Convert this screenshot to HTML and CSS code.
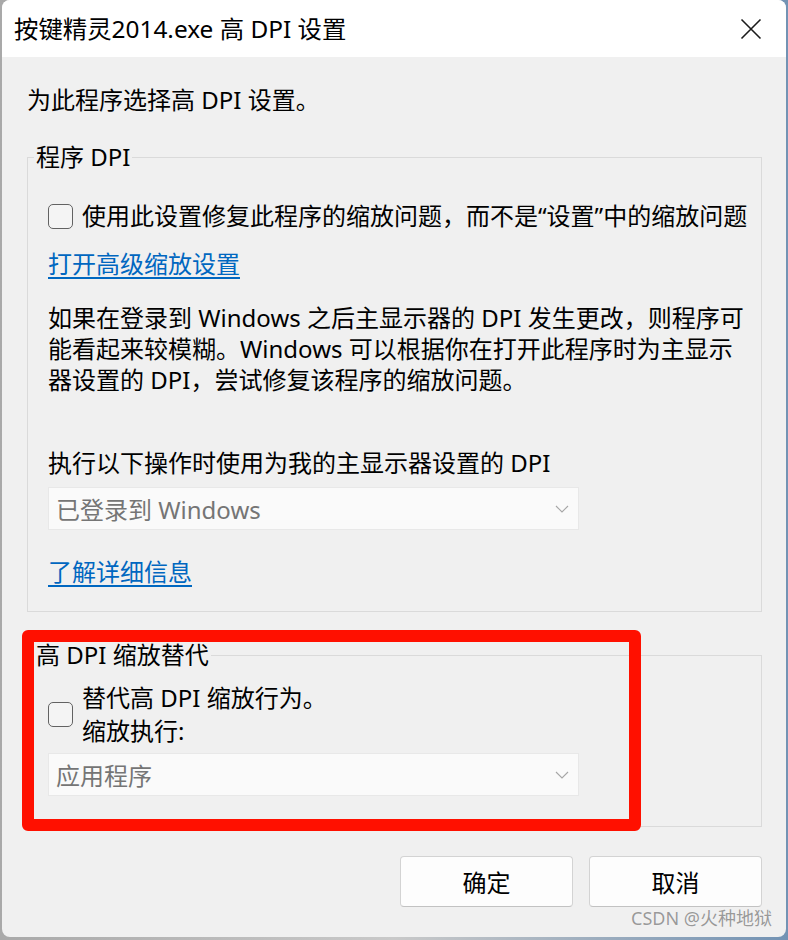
FILE: index.html
```html
<!DOCTYPE html>
<html lang="zh-CN">
<head>
    <meta charset="UTF-8">
    <meta name="viewport" content="width=device-width, initial-scale=1.0">
    <title>按键精灵2014.exe 高 DPI 设置</title>
    <link rel="stylesheet" href="styles.css">
</head>
<body>

    <div class="window">
        <div class="titlebar">
            <span class="title">按键精灵2014.exe 高 DPI 设置</span>
            <button class="close-btn" type="button" aria-label="关闭">
                <svg width="22" height="22" viewBox="0 0 22 22">
                    <path d="M1.5 1.5 L20.5 20.5 M20.5 1.5 L1.5 20.5" stroke="#1b1b1b" stroke-width="1.6" fill="none"/>
                </svg>
            </button>
        </div>

        <div class="content">
            <p class="intro">为此程序选择高 DPI 设置。</p>

            <fieldset class="group">
                <legend>程序 DPI</legend>
                <div class="group-body">
                    <label class="check-row">
                        <span class="checkbox"></span>
                        <span>使用此设置修复此程序的缩放问题，而不是“设置”中的缩放问题</span>
                    </label>
                    <a href="#" class="link link-scaling">打开高级缩放设置</a>
                    <p class="desc">如果在登录到 Windows 之后主显示器的 DPI 发生更改，则程序可<br>能看起来较模糊。Windows 可以根据你在打开此程序时为主显示<br>器设置的 DPI，尝试修复该程序的缩放问题。</p>
                    <div class="field-label">执行以下操作时使用为我的主显示器设置的 DPI</div>
                    <div class="select">
                        <span>已登录到 Windows</span>
                        <svg width="14" height="8" viewBox="0 0 14 8"><path d="M1 1 L7 7 L13 1" stroke="#a6a6a6" stroke-width="1.1" fill="none"/></svg>
                    </div>
                    <a href="#" class="link link-more">了解详细信息</a>
                </div>
            </fieldset>

            <fieldset class="group group-override">
                <legend>高 DPI 缩放替代</legend>
                <div class="group-body">
                    <label class="check-row check-row-two">
                        <span class="checkbox"></span>
                        <span>替代高 DPI 缩放行为。<br>缩放执行:</span>
                    </label>
                    <div class="select select-app">
                        <span>应用程序</span>
                        <svg width="14" height="8" viewBox="0 0 14 8"><path d="M1 1 L7 7 L13 1" stroke="#a6a6a6" stroke-width="1.1" fill="none"/></svg>
                    </div>
                </div>
            </fieldset>

            <div class="buttons">
                <button class="btn" type="button">确定</button>
                <button class="btn" type="button">取消</button>
            </div>
        </div>

        <!-- red annotation box over the override group -->
        <div class="highlight"></div>
        <div class="watermark">CSDN @火种地狱</div>
    </div>

</body>
</html>
```

FILE: styles.css
```css
* {
    box-sizing: border-box;
}

body {
    margin: 0;
    height: 940px;
    overflow: hidden;
    background: linear-gradient(90deg, #a9a9a9 0%, #c9c9c9 50%, #7393b4 100%);
    font-family: "Noto Sans", "Noto Sans CJK SC", sans-serif;
    color: #000;
}

.window {
    position: relative;
    margin-left: 2px;
    width: 784px;
    height: 937px;
    background: #f0f0f0;
    border-radius: 8px;
    overflow: hidden;
}

.titlebar {
    height: 57px;
    background: #fff;
    display: flex;
    align-items: center;
    justify-content: space-between;
    padding-left: 12px;
}

.title { font-size: 24.4px; line-height: 32px; }

.close-btn {
    width: 70px; height: 57px; border: none; background: transparent;
    display: flex; align-items: center; justify-content: center; padding: 0;
}

.content { padding: 27px 24px 0 25px; font-size: 24px; }

.intro { margin: 0; line-height: 32px; }

.group {
    margin: 25px 0 0 0;
    padding: 0 0 23px 6px;
    border: 1px solid #dadada;
    min-width: 0;
}

.group legend { padding: 0 2px; line-height: 32px; }

.group-body { padding: 27px 12px 0 14px; }

.check-row { display: flex; align-items: center; gap: 9px; line-height: 32px; white-space: nowrap; }

.checkbox {
    flex: none; width: 25px; height: 25px;
    border: 1.5px solid #626262; border-radius: 5px; background: #f4f4f4;
}

.link {
    display: inline-block; color: #0067c0; text-decoration: underline;
    text-underline-offset: 4px; text-decoration-thickness: 1.5px; line-height: 32px;
}
.link-scaling { margin-top: 16px; }
.link-more { margin-top: 26px; }

.desc { margin: 22px 0 0 0; line-height: 31px; white-space: nowrap; }

.field-label { margin-top: 52px; line-height: 32px; }

.select {
    display: flex; align-items: center; justify-content: space-between;
    width: 531px; height: 43px; margin-top: 8px; padding: 0 9px 0 7px;
    background: #fafafa; border: 1px solid #e8e8e8; color: #757575;
}

.group-override { margin-top: 27px; padding-bottom: 30px; }
.group-override .group-body { padding-top: 10px; }

.check-row-two { line-height: 33px; }
.select-app { margin-top: 6px; }

.buttons { display: flex; justify-content: flex-end; gap: 16px; margin-top: 29px; }

.btn {
    width: 173px; height: 51px; font: inherit; font-size: 24px; color: #000;
    background: #fdfdfd; border: 1px solid #d3d3d3; border-bottom-color: #c2c2c2;
    border-radius: 4px;
}

.highlight {
    position: absolute; left: 20px; top: 630px; width: 619px; height: 201px;
    border: 12px solid #ff1000; border-radius: 6px;
}

.watermark {
    position: absolute; right: 14px; bottom: 7px;
    font-size: 18px; color: #999; text-shadow: 0 0 1px #fff;
}
```
